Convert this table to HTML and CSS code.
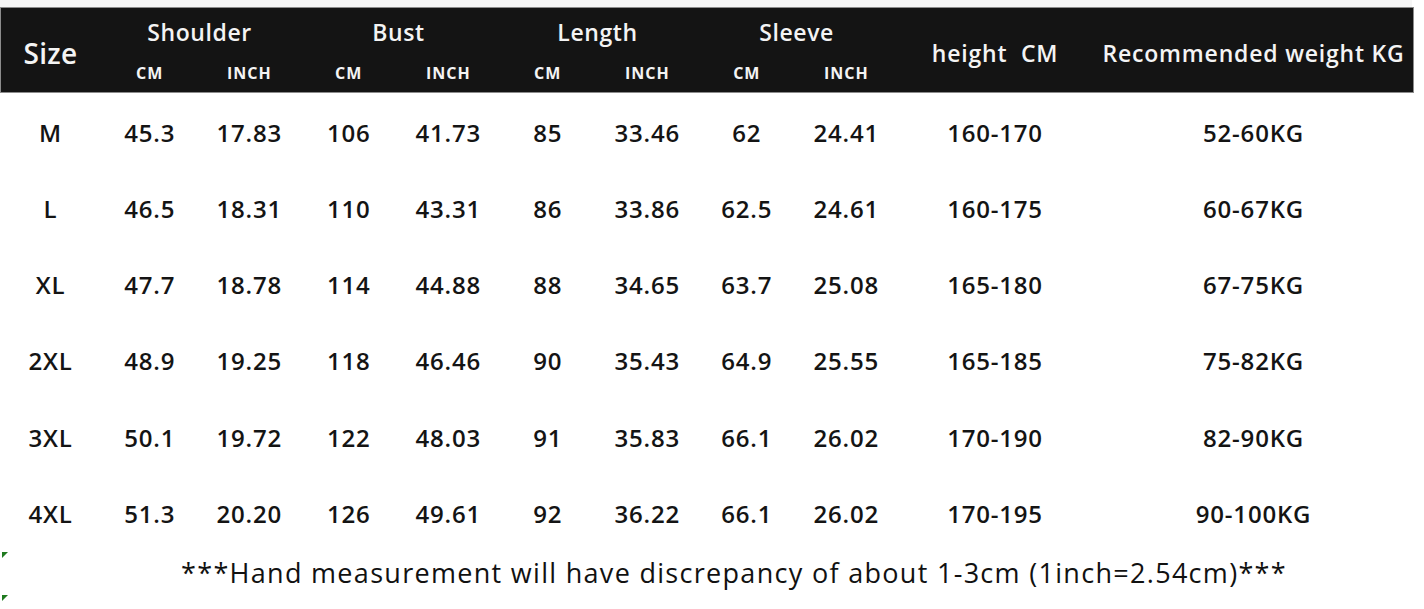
FILE: index.html
```html
<!DOCTYPE html>
<html lang="en">
<head>
    <meta charset="UTF-8">
    <meta name="viewport" content="width=device-width, initial-scale=1.0">
    <title>Size Chart</title>
    <link rel="stylesheet" href="styles.css">
</head>
<body>

    <div class="top-strip"></div>

    <table class="size-chart">
        <colgroup>
            <col class="col-size">
            <col class="col-sub"><col class="col-sub">
            <col class="col-sub"><col class="col-sub">
            <col class="col-sub"><col class="col-sub">
            <col class="col-sub"><col class="col-sub">
            <col class="col-height">
            <col class="col-weight">
        </colgroup>
        <thead>
            <tr class="head-main">
                <th rowspan="2" class="size-head">Size</th>
                <th colspan="2">Shoulder</th>
                <th colspan="2">Bust</th>
                <th colspan="2">Length</th>
                <th colspan="2">Sleeve</th>
                <th rowspan="2" class="wide-head">height&nbsp; CM</th>
                <th rowspan="2" class="wide-head">Recommended weight KG</th>
            </tr>
            <tr class="head-sub">
                <th>CM</th><th>INCH</th>
                <th>CM</th><th>INCH</th>
                <th>CM</th><th>INCH</th>
                <th>CM</th><th>INCH</th>
            </tr>
        </thead>
        <tbody>
            <tr>
                <td>M</td><td>45.3</td><td>17.83</td><td>106</td><td>41.73</td><td>85</td><td>33.46</td><td>62</td><td>24.41</td><td>160-170</td><td>52-60KG</td>
            </tr>
            <tr>
                <td>L</td><td>46.5</td><td>18.31</td><td>110</td><td>43.31</td><td>86</td><td>33.86</td><td>62.5</td><td>24.61</td><td>160-175</td><td>60-67KG</td>
            </tr>
            <tr>
                <td>XL</td><td>47.7</td><td>18.78</td><td>114</td><td>44.88</td><td>88</td><td>34.65</td><td>63.7</td><td>25.08</td><td>165-180</td><td>67-75KG</td>
            </tr>
            <tr>
                <td>2XL</td><td>48.9</td><td>19.25</td><td>118</td><td>46.46</td><td>90</td><td>35.43</td><td>64.9</td><td>25.55</td><td>165-185</td><td>75-82KG</td>
            </tr>
            <tr>
                <td>3XL</td><td>50.1</td><td>19.72</td><td>122</td><td>48.03</td><td>91</td><td>35.83</td><td>66.1</td><td>26.02</td><td>170-190</td><td>82-90KG</td>
            </tr>
            <tr>
                <td>4XL</td><td>51.3</td><td>20.20</td><td>126</td><td>49.61</td><td>92</td><td>36.22</td><td>66.1</td><td>26.02</td><td>170-195</td><td>90-100KG</td>
            </tr>
        </tbody>
    </table>

    <div class="note">
        <span class="cell-mark mark-top"></span>
        <span class="cell-mark mark-bottom"></span>
        <p>***Hand measurement will have discrepancy of about 1-3cm (1inch=2.54cm)***</p>
    </div>

</body>
</html>
```

FILE: styles.css
```css
body {
    margin: 0;
    background-color: #fff;
    font-family: 'Open Sans', 'Noto Sans', sans-serif;
    color: #141414;
    overflow: hidden;
}

.top-strip {
    width: 1412px;
    height: 8px;
    background-color: #f6f6f6;
}

.size-chart {
    margin-left: 1px;
    width: 1412px;
    table-layout: fixed;
    border-collapse: collapse;
    text-align: center;
}

.col-size { width: 99px; }
.col-sub { width: 99.5px; }
.col-height { width: 198px; }
.col-weight { width: 319px; }

.size-chart thead {
    background-color: #141414;
    color: #f4f4f4;
    outline: 1px solid #8c8c8c;
}

.size-chart th {
    padding: 0;
    font-weight: 600;
}

.head-main {
    height: 46px;
}

.head-main th {
    font-size: 23px;
    letter-spacing: 0.6px;
    padding-top: 2px;
}

.head-main .size-head {
    font-size: 28px;
    letter-spacing: 0.3px;
    padding-top: 6px;
}

.head-main .wide-head {
    font-size: 23px;
    letter-spacing: 0.8px;
    padding-top: 6px;
}

.head-sub {
    height: 38px;
}

.head-sub th {
    font-size: 16px;
    font-weight: 700;
    letter-spacing: 1px;
    padding-top: 0;
}

.size-chart tbody tr {
    height: 76.4px;
}

.size-chart tbody tr:first-child {
    height: 78px;
}

.size-chart tbody tr:first-child td {
    padding-top: 2px;
}

.size-chart td {
    padding: 0;
    font-size: 24px;
    font-weight: 600;
    letter-spacing: 0.8px;
}

.note {
    position: relative;
    height: 56px;
}

.note p {
    margin: 0;
    padding: 2px 0 0 54px;
    text-align: center;
    font-size: 27px;
    font-weight: 400;
    letter-spacing: 1.3px;
    color: #111;
    width: 1360px;
    white-space: nowrap;
}

.cell-mark {
    position: absolute;
    left: 2px;
    width: 0;
    height: 0;
    border-top: 6px solid #1f7a1f;
    border-right: 6px solid transparent;
}

.mark-top { top: 0; }
.mark-bottom { top: 43px; }
```
